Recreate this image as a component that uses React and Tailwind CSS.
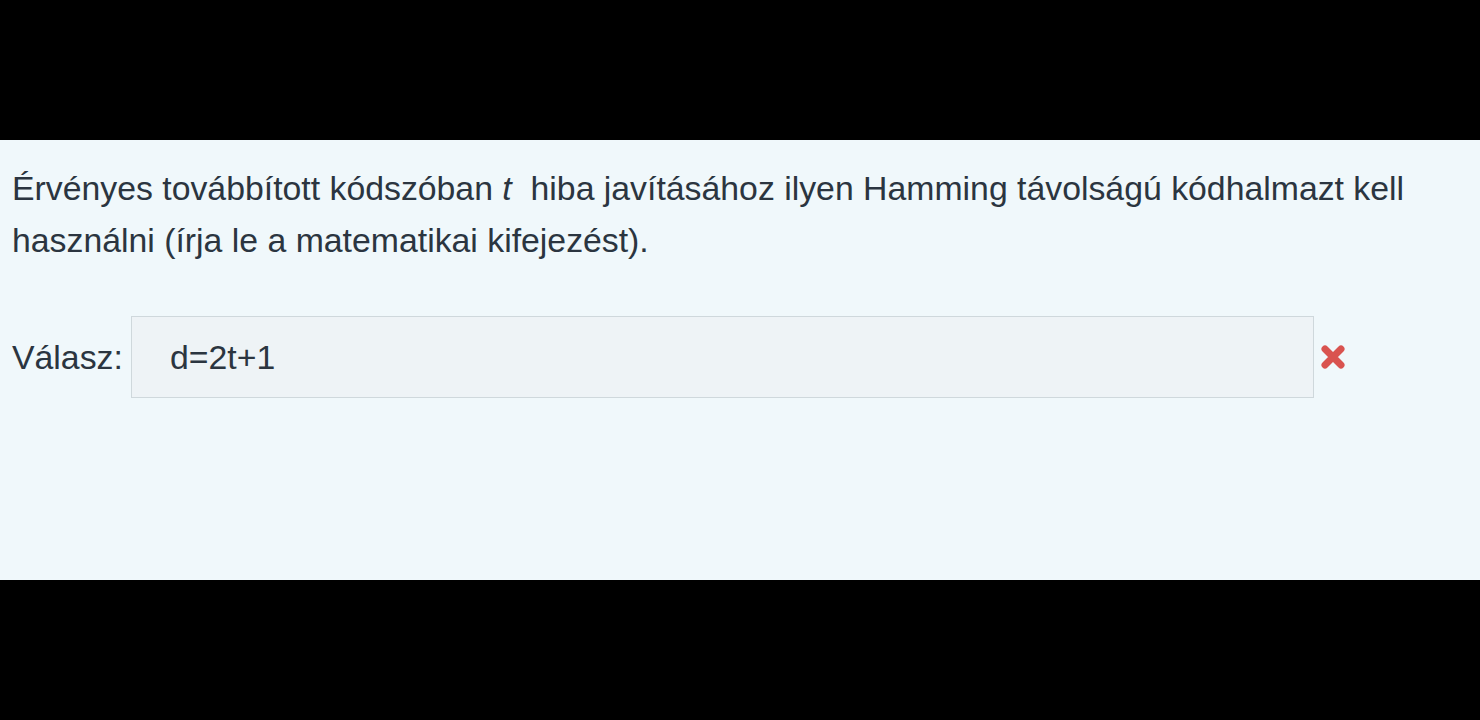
export default function App() {
  return (
    <div className="w-[1480px] h-[720px] bg-black flex flex-col" style={{ fontFamily: '"Liberation Sans", Arial, sans-serif' }}>
      <div className="h-[140px] shrink-0" />
      <div className="h-[440px] shrink-0 bg-[#f0f8fb] px-[12px] pt-[22px] text-[#2b3540]">
        <p className="text-[33.8px] leading-[52px]">
          Érvényes továbbított kódszóban <i>t</i>&nbsp; hiba javításához ilyen Hamming távolságú kódhalmazt kell használni (írja le a matematikai kifejezést).
        </p>
        <div className="flex items-center mt-[50px]">
          <span className="text-[33.8px] w-[119px] shrink-0">Válasz:</span>
          <div className="w-[1183px] h-[82px] bg-[#eef3f6] border border-[#cfd8dc] flex items-center pl-[38px] text-[33.8px]">
            d=2t+1
          </div>
          <svg className="ml-[6px]" width="26" height="26" viewBox="0 0 26 26">
            <path d="M5 5 L21 21 M21 5 L5 21" stroke="#d9534f" strokeWidth="7" strokeLinecap="round" />
          </svg>
        </div>
      </div>
      <div className="flex-1" />
    </div>
  );
}
